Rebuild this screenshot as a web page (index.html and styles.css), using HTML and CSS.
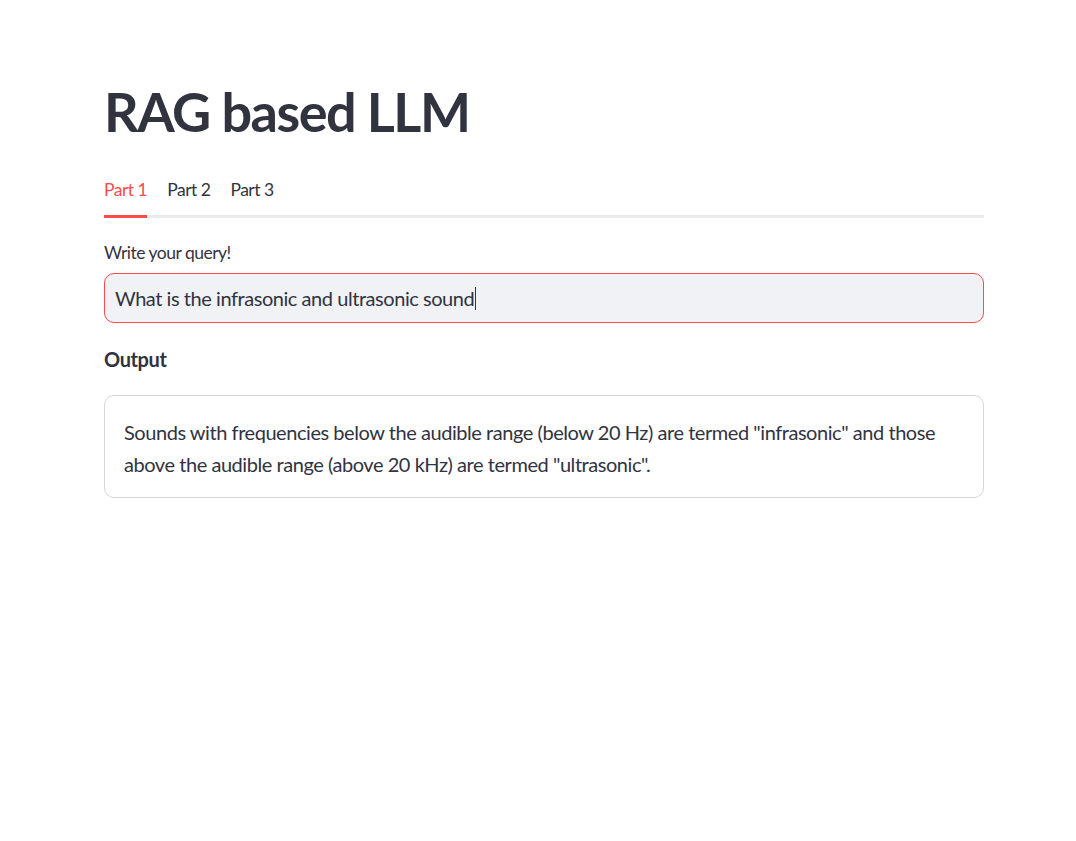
FILE: index.html
```html
<!DOCTYPE html>
<html lang="en">
<head>
<meta charset="utf-8">
<title>RAG based LLM</title>
<link rel="stylesheet" href="styles.css">
</head>
<body>
<main class="main">
  <h1 class="title">RAG based LLM</h1>
  <div class="tabs">
    <div class="tab tab-active">Part 1</div>
    <div class="tab">Part 2</div>
    <div class="tab">Part 3</div>
  </div>
  <label class="label">Write your query!</label>
  <div class="input"><span class="input-text">What is the infrasonic and ultrasonic sound</span><span class="caret"></span></div>
  <div class="output-head">Output</div>
  <div class="output-box">
    <p class="output-text">Sounds with frequencies below the audible range (below 20 Hz) are termed "infrasonic" and those above the audible range (above 20 kHz) are termed "ultrasonic".</p>
  </div>
</main>
</body>
</html>
```
FILE: styles.css
```css
* { box-sizing: border-box; }
html, body { margin: 0; padding: 0; background: #ffffff; }
body {
  font-family: "Lato", "Liberation Sans", sans-serif;
  color: #31333f;
}
.main {
  width: 880px;
  margin-left: 104px;
  padding-top: 79px;
  display: flex;
  flex-direction: column;
}
.title {
  margin: 0;
  font-size: 54px;
  line-height: 66px;
  font-weight: 700;
  letter-spacing: -1.5px;
  color: #31333f;
}
.tabs {
  margin-top: 31px;
  display: flex;
  gap: 20px;
  border-bottom: 3px solid #ebebeb;
}
.tab {
  font-size: 17.5px;
  line-height: 28px;
  letter-spacing: -0.5px;
  padding-bottom: 11px;
  border-bottom: 3px solid transparent;
  margin-bottom: -3px;
  color: #31333f;
}
.tab-active {
  color: #ff4b4b;
  border-bottom-color: #ff4b4b;
}
.label {
  margin-top: 21px;
  font-size: 17.5px;
  line-height: 28px;
  letter-spacing: -0.5px;
}
.input {
  margin-top: 6px;
  height: 50px;
  border: 1px solid #ff4b4b;
  border-radius: 10px;
  background: #f0f2f6;
  display: flex;
  align-items: center;
  padding-left: 10px;
  font-size: 20px;
  letter-spacing: -0.45px;
}
.caret {
  display: inline-block;
  width: 1px;
  height: 23px;
  margin-left: 1px;
  background: #31333f;
}
.output-head {
  margin-top: 20px;
  font-size: 20px;
  line-height: 32px;
  font-weight: 700;
  letter-spacing: -0.4px;
}
.output-box {
  margin-top: 20px;
  border: 1px solid #d6d6d9;
  border-radius: 10px;
  padding: 20px 19px 17px;
}
.output-text {
  margin: 0;
  font-size: 20px;
  line-height: 32px;
  letter-spacing: -0.45px;
}
```
